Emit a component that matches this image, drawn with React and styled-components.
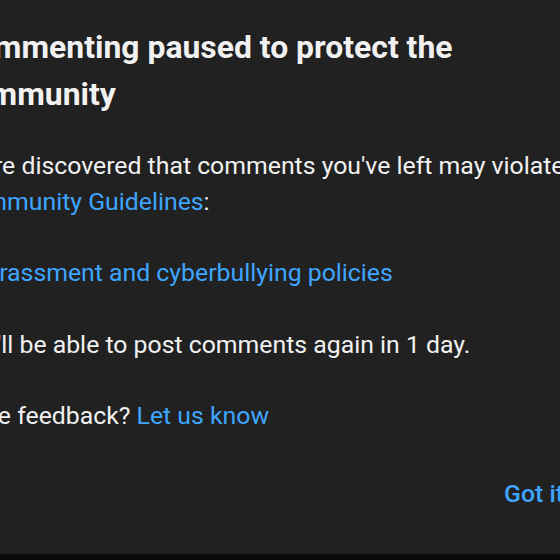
import React from 'react';
import styled, { createGlobalStyle } from 'styled-components';

const GlobalStyle = createGlobalStyle`
  html, body {
    margin: 0;
    padding: 0;
    background: #0b0b0b;
  }
  body {
    font-family: Roboto, "Noto Sans", Arial, sans-serif;
  }
`;

export default function App() {
  return (
    <>
      <GlobalStyle />
      <Page>
        <Dialog>
          <Title>Commenting paused to protect the community</Title>
          <Body>
            <Para>
              We're discovered that comments you've left may violate{' '}
              <Link href="#">Community Guidelines</Link>:
            </Para>
            <Policies>
              <li>
                <Link href="#">Harassment and cyberbullying policies</Link>
              </li>
            </Policies>
            <Para>You'll be able to post comments again in 1 day.</Para>
            <Para>
              Have feedback? <Link href="#">Let us know</Link>
            </Para>
          </Body>
          <Actions>
            <TextButton>Got it</TextButton>
          </Actions>
        </Dialog>
      </Page>
    </>
  );
}

const Page = styled.div`
  width: 560px;
  height: 560px;
  overflow: hidden;
`;

const Dialog = styled.div`
  box-sizing: border-box;
  width: 635px;
  height: 554px;
  margin-left: -45px;
  padding-top: 24px;
  background: #212121;
  color: #f1f1f1;
  display: flex;
  flex-direction: column;
`;

const Title = styled.h2`
  margin: 0;
  width: 560px;
  font-size: 31.9px;
  line-height: 47px;
  font-weight: 700;
`;

const Body = styled.div`
  margin-top: 30px;
  width: 640px;
  font-size: 24.8px;
  line-height: 35.75px;
`;

const Para = styled.p`
  margin: 0 0 35.75px 0;
  &:last-child {
    margin-bottom: 0;
  }
`;

const Policies = styled.ul`
  list-style: none;
  margin: 0 0 35.75px 0;
  padding: 0 0 0 13px;
`;

const Link = styled.a`
  color: #3ea6ff;
  text-decoration: none;
`;

const Actions = styled.div`
  display: flex;
  justify-content: flex-end;
  margin-top: 42px;
`;

const TextButton = styled.button`
  background: none;
  border: none;
  padding: 0 26px 0 0;
  font-family: inherit;
  font-size: 24.8px;
  font-weight: 500;
  line-height: 36px;
  color: #3ea6ff;
  cursor: pointer;
`;
